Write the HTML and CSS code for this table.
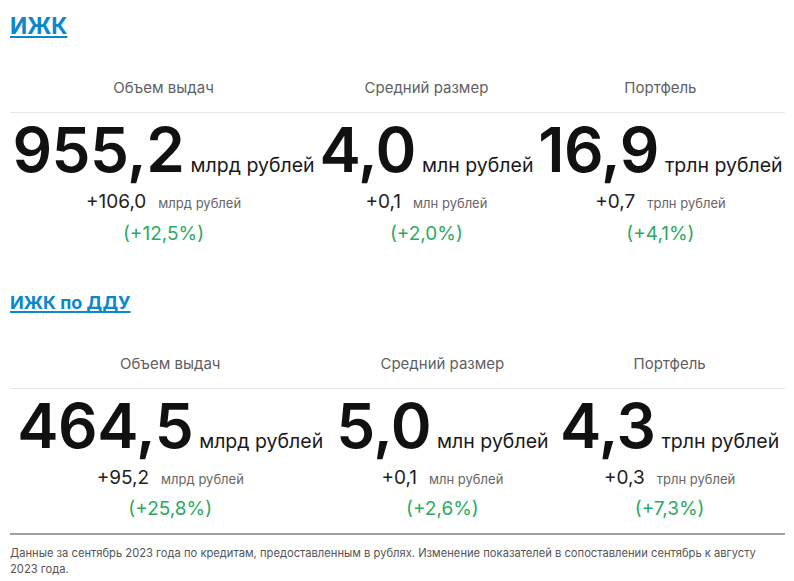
FILE: index.html
```html
<!DOCTYPE html>
<html lang="ru">
<head>
<meta charset="utf-8">
<link rel="stylesheet" href="styles.css">
</head>
<body>
<main class="page">
  <section class="block">
    <h2 class="title title-lg"><a href="#">ИЖК</a></h2>
    <table class="stats">
      <thead>
        <tr><th>Объем выдач</th><th>Средний размер</th><th>Портфель</th></tr>
      </thead>
      <tbody>
        <tr>
          <td>
            <div class="main"><span class="num">955,2</span><span class="unit">млрд рублей</span></div>
            <div class="delta"><span class="dnum">+106,0</span><span class="dunit">млрд рублей</span></div>
            <div class="pct">(+12,5%)</div>
          </td>
          <td>
            <div class="main"><span class="num">4,0</span><span class="unit">млн рублей</span></div>
            <div class="delta"><span class="dnum">+0,1</span><span class="dunit">млн рублей</span></div>
            <div class="pct">(+2,0%)</div>
          </td>
          <td>
            <div class="main"><span class="num">16,9</span><span class="unit">трлн рублей</span></div>
            <div class="delta"><span class="dnum">+0,7</span><span class="dunit">трлн рублей</span></div>
            <div class="pct">(+4,1%)</div>
          </td>
        </tr>
      </tbody>
    </table>
  </section>

  <section class="block block-2">
    <h2 class="title title-sm"><a href="#">ИЖК по ДДУ</a></h2>
    <table class="stats">
      <thead>
        <tr><th>Объем выдач</th><th>Средний размер</th><th>Портфель</th></tr>
      </thead>
      <tbody>
        <tr>
          <td>
            <div class="main"><span class="num">464,5</span><span class="unit">млрд рублей</span></div>
            <div class="delta"><span class="dnum">+95,2</span><span class="dunit">млрд рублей</span></div>
            <div class="pct">(+25,8%)</div>
          </td>
          <td>
            <div class="main"><span class="num">5,0</span><span class="unit">млн рублей</span></div>
            <div class="delta"><span class="dnum">+0,1</span><span class="dunit">млн рублей</span></div>
            <div class="pct">(+2,6%)</div>
          </td>
          <td>
            <div class="main"><span class="num">4,3</span><span class="unit">трлн рублей</span></div>
            <div class="delta"><span class="dnum">+0,3</span><span class="dunit">трлн рублей</span></div>
            <div class="pct">(+7,3%)</div>
          </td>
        </tr>
      </tbody>
    </table>
  </section>

  <footer class="note">
    Данные за сентябрь 2023 года по кредитам, предоставленным в рублях. Изменение показателей в сопоставлении сентябрь к августу 2023 года.
  </footer>
</main>
</body>
</html>
```

FILE: styles.css
```css
html, body {
  margin: 0;
  padding: 0;
  background: #ffffff;
}

body {
  font-family: Inter, "Noto Sans", sans-serif;
  color: #111111;
}

.page {
  padding: 0 9px 0 10px;
}

.title {
  margin: 0;
  font-weight: 700;
}

.title a {
  color: #0b87cf;
  text-decoration: underline;
  text-decoration-thickness: 2px;
  text-underline-offset: 2px;
  text-decoration-skip-ink: none;
}

.title-lg {
  margin-top: 12px;
  font-size: 22.5px;
  line-height: 28px;
}

.title-sm {
  margin-top: 45px;
  font-size: 18px;
  line-height: 24px;
}

.stats {
  width: 100%;
  border-collapse: collapse;
  margin-top: 38px;
}

.block-2 .stats {
  margin-top: 39px;
}

.stats th {
  font-weight: 400;
  font-size: 15px;
  line-height: 20px;
  color: #5f5f5f;
  padding: 0 0 14px;
  border-bottom: 1px solid #e6e6e6;
  text-align: center;
}

.stats td {
  padding: 6px 2px 0;
  text-align: center;
  vertical-align: top;
  white-space: nowrap;
}

.main {
  line-height: 62px;
  height: 62px;
}

.num {
  font-size: 62px;
  font-weight: 600;
  letter-spacing: -0.5px;
  color: #111111;
}

.unit {
  font-size: 19.5px;
  font-weight: 400;
  margin-left: 6px;
  color: #1a1a1a;
}

.delta {
  margin-top: 9px;
  line-height: 24px;
}

.block-2 .delta {
  margin-top: 9px;
}

.dnum {
  font-size: 19px;
  color: #222222;
}

.dunit {
  font-size: 13px;
  color: #666666;
  margin-left: 12px;
}

.pct {
  margin-top: 7px;
  line-height: 24px;
  font-size: 19px;
  color: #2ea862;
}

.block-2 .pct {
  margin-top: 6px;
}

.note {
  margin-top: 12px;
  border-top: 2px solid #a0a0a0;
  padding-top: 10px;
  font-size: 11.2px;
  line-height: 16px;
  color: #555555;
}
```
